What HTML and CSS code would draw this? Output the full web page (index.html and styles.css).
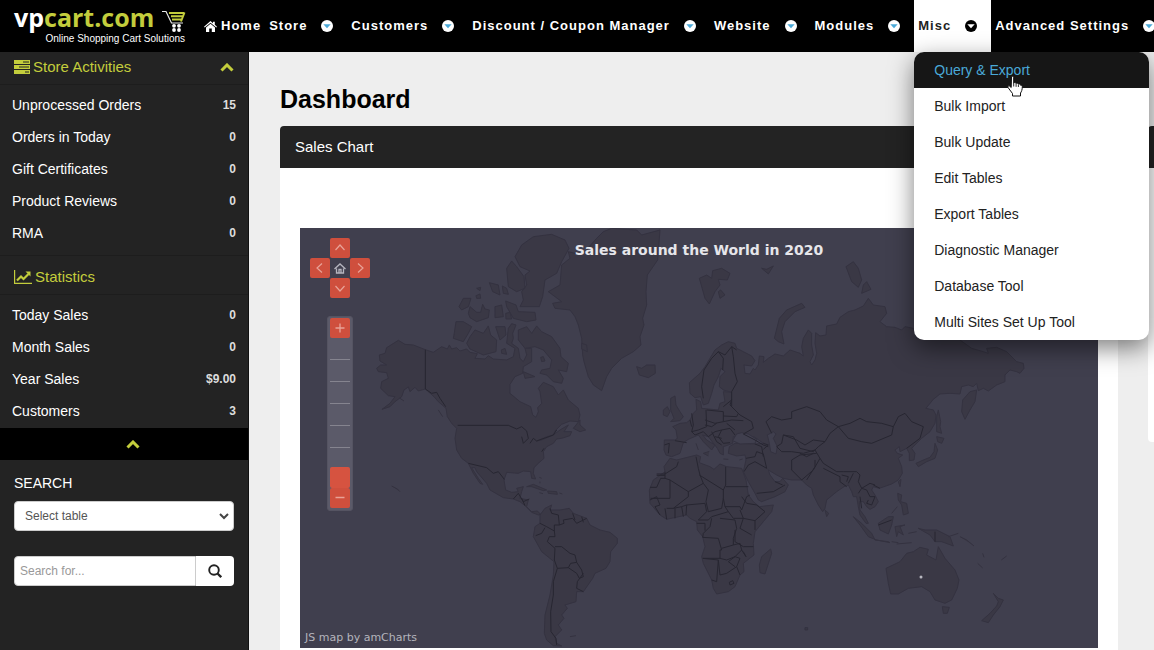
FILE: index.html
```html
<!DOCTYPE html>
<html lang="en">
<head>
<meta charset="utf-8">
<meta name="viewport" content="width=device-width, initial-scale=1">
<title>Dashboard - vpcart.com</title>
<link rel="stylesheet" href="styles.css">
</head>
<body>
<svg class="defs" aria-hidden="true">
  <symbol id="caret" viewBox="0 0 12 12"><circle class="disc" cx="6" cy="6" r="6"/><path class="arrow" d="M2.3 4.2h7.4L6 8.2z"/></symbol>
  <symbol id="chevron-up" viewBox="0 0 14 9"><path d="M1.5 7.5 7 2l5.500 5.500" fill="none" stroke="currentColor" stroke-width="3"/></symbol>
  <symbol id="thin-up" viewBox="0 0 20 20"><path d="M5.500 12 10 7l4.500 5" fill="none" stroke="currentColor" stroke-width="1.200"/></symbol>
</svg>
<div class="app">
  <header class="header">
    <a class="logo" href="#">
      <span class="brand"><span class="brand-vp">vp</span>cart.com</span>
      <span class="tagline">Online Shopping Cart Solutions</span>
      <svg class="cart" viewBox="0 0 24 22" aria-hidden="true">
        <path d="M0 1.500h4L9.500 13H21" fill="none" stroke="#e8e8e8" stroke-width="1.200"/>
        <path d="M7 3h15.500M9 6.300h12M10 9.500h10M22.500 2.500l-3.500 9" fill="none" stroke="#c3cd3c" stroke-width="2"/>
        <g fill="#fff"><circle cx="12" cy="15.800" r="1.900"/><circle cx="17" cy="15.800" r="1.900"/><circle cx="12" cy="20" r="1.900"/><circle cx="17" cy="20" r="1.900"/></g>
      </svg>
    </a>
    <nav class="nav">
      <a class="nav-item" href="#"><svg class="home" viewBox="0 0 13 11" aria-hidden="true"><path fill="currentColor" d="M6.500 0 9 2.200V.8h1.800v3L13 5.800l-.7.8-5.800-4.900L.7 6.600 0 5.800zM6.500 2.800l4.500 3.800V11H7.800V7.500H5.200V11H2V6.600z"/></svg>Home</a>
      <a class="nav-item" href="#">Store<svg class="caret" aria-hidden="true"><use href="#caret"/></svg></a>
      <a class="nav-item" href="#">Customers<svg class="caret" aria-hidden="true"><use href="#caret"/></svg></a>
      <a class="nav-item" href="#">Discount / Coupon Manager<svg class="caret" aria-hidden="true"><use href="#caret"/></svg></a>
      <a class="nav-item" href="#">Website<svg class="caret" aria-hidden="true"><use href="#caret"/></svg></a>
      <a class="nav-item" href="#">Modules<svg class="caret" aria-hidden="true"><use href="#caret"/></svg></a>
      <div class="nav-group">
        <a class="nav-item open" href="#">Misc<svg class="caret" aria-hidden="true"><use href="#caret"/></svg></a>
        <div class="menu">
          <a class="active" href="#">Query &amp; Export</a>
          <a href="#">Bulk Import</a>
          <a href="#">Bulk Update</a>
          <a href="#">Edit Tables</a>
          <a href="#">Export Tables</a>
          <a href="#">Diagnostic Manager</a>
          <a href="#">Database Tool</a>
          <a href="#">Multi Sites Set Up Tool</a>
          <svg class="pointer" viewBox="0 0 16 22" aria-hidden="true"><path d="M4.500 1.500c1.200-.8 2.200 0 2.200 1.200V8c.8-.8 2-.5 2.300.5 1-.8 2-.3 2.300.6 1.200-.6 2.200.2 2.300 1.200 1-.2 1.700.4 1.700 1.400 0 3-.8 5-1.800 6.300v3H5.500v-2.500L1 12.500c-.6-1.200.8-2.200 1.800-1.300l1.400 1.300z" fill="#fff" stroke="#111" stroke-width="1"/><path d="M6.700 8v3.500M9.100 8.800v3M11.400 9.500v2.500" stroke="#111" stroke-width=".9"/></svg>
        </div>
      </div>
      <a class="nav-item" href="#">Advanced Settings<svg class="caret" aria-hidden="true"><use href="#caret"/></svg></a>
    </nav>
  </header>
  <div class="body">
    <aside class="sidebar">
      <h2 class="side-title first"><svg class="tasks" viewBox="0 0 16 14" aria-hidden="true"><path fill="#c3cd3c" d="M0 0h16v4H0zM0 5h16v4H0zM0 10h16v4H0z"/><path stroke="#232323" stroke-width="1" d="M9 2h6M5 7h10M11 12h4"/></svg>Store Activities<svg class="chevron" aria-hidden="true"><use href="#chevron-up"/></svg></h2>
      <ul class="stats">
        <li><a href="#">Unprocessed Orders</a><b>15</b></li>
        <li><a href="#">Orders in Today</a><b>0</b></li>
        <li><a href="#">Gift Certificates</a><b>0</b></li>
        <li><a href="#">Product Reviews</a><b>0</b></li>
        <li><a href="#">RMA</a><b>0</b></li>
      </ul>
      <h2 class="side-title"><svg class="chart" viewBox="0 0 18 14" aria-hidden="true"><path d="M.6 0v13.400H18" fill="none" stroke="#c3cd3c" stroke-width="1.200"/><path d="M3 10.500 7 6.500l2.500 2.500 5-5" fill="none" stroke="#c3cd3c" stroke-width="2.200"/><path d="M11.500 1.500h5v5z" fill="#c3cd3c"/></svg>Statistics</h2>
      <ul class="stats last">
        <li><a href="#">Today Sales</a><b>0</b></li>
        <li><a href="#">Month Sales</a><b>0</b></li>
        <li><a href="#">Year Sales</a><b>$9.00</b></li>
        <li><a href="#">Customers</a><b>3</b></li>
      </ul>
      <button class="collapse" type="button" aria-label="Collapse"><svg class="chevron" aria-hidden="true"><use href="#chevron-up"/></svg></button>
      <form class="search">
        <label for="table">SEARCH</label>
        <div class="select-wrap">
          <select id="table"><option>Select table</option></select>
          <svg viewBox="0 0 10 7" aria-hidden="true"><path d="m1 1 4 4 4-4" fill="none" stroke="#444" stroke-width="2"/></svg>
        </div>
        <div class="search-row">
          <input type="text" placeholder="Search for..." aria-label="Search for">
          <button type="button" aria-label="Search"><svg viewBox="0 0 14 14" aria-hidden="true"><circle cx="6" cy="6" r="4.800" fill="none" stroke="#222" stroke-width="1.900"/><path d="m9.500 9.500 3.700 3.700" stroke="#222" stroke-width="2.300"/></svg></button>
        </div>
      </form>
    </aside>
    <main class="main">
      <h1>Dashboard</h1>
      <div class="columns">
        <section class="panel sales">
          <h2>Sales Chart</h2>
          <div class="panel-body">
            <div class="map">
<svg class="world" viewBox="300 228 798 420" role="img" aria-label="World map">
  <!-- Americas and Greenland -->
  <g transform="translate(360 225) scale(.33333)">
    <g class="land">
      <path d="M58 390 75 385 80 368 115 346 135 358 160 360 196 374 220 382 245 365 262 372 268 360 275 372 290 368 300 378 320 372 330 382 352 386 345 400 375 402 385 392 400 402 440 405 460 395 465 370 440 355 445 310 455 296 468 300 458 325 460 340 455 355 475 370 480 400 490 410 500 390 495 370 515 370 515 410 490 425 488 445 465 455 450 478 450 505 480 530 512 545 518 570 528 577 535 560 533 548 545 535 540 500 535 490 550 472 580 485 595 510 610 495 625 525 655 550 660 570 655 590 630 588 605 598 585 618 580 630 560 635 530 648 545 645 580 630 600 615 625 600 612 620 635 620 630 632 605 640 590 642 580 655 560 665 550 680 552 700 535 715 522 728 520 745 527 762 515 760 512 740 490 738 475 745 440 742 432 765 437 795 455 802 475 800 470 790 490 785 485 800 480 820 505 825 500 845 515 860 532 858 542 868 535 870 515 862 495 842 480 830 460 822 430 818 390 795 380 775 350 740 345 728 335 728 355 760 368 778 360 775 340 745 325 715 305 700 290 675 285 640 290 610 275 595 262 575 258 550 235 530 222 515 196 492 175 498 165 487 150 500 145 486 132 495 125 515 105 530 90 545 66 553 90 535 105 515 85 512 62 490 65 470 85 460 80 443 55 440 50 430 62 420 80 420 60 408z"/>
      <path d="M540 870 555 850 575 840 570 855 600 855 628 850 640 865 680 880 690 900 720 915 750 922 772 940 772 955 752 980 750 1010 738 1030 705 1045 698 1060 670 1100 650 1100 648 1130 615 1140 622 1150 605 1170 612 1180 595 1200 605 1215 585 1235 590 1255 605 1263 580 1262 560 1245 553 1225 555 1170 570 1110 580 1050 582 1010 545 980 520 935 525 905 540 895z"/>
      <path d="M710 40 730 20 755 10 830 15 845 30 900 15 893 105 862 150 858 200 860 240 848 280 852 300 840 335 843 360 820 380 785 400 755 430 740 455 725 497 700 480 685 455 672 410 668 390 665 340 655 300 645 275 630 255 585 250 578 235 605 230 565 200 600 180 605 120 630 100 625 80 665 90z"/>
      <path d="M465 95 485 60 520 35 575 28 615 45 627 70 605 110 590 145 555 165 548 215 538 245 480 245 490 225 485 200 500 180 495 150 510 138 480 125zM440 130 455 108 470 125 492 155 495 190 470 200 445 185zM388 173 415 180 420 210 398 200zM427 183 440 190 445 208 430 205zM297 245 310 220 333 220 325 245 305 255zM325 265 330 245 350 262 362 262 368 238 375 252 388 255 385 278 350 290 330 278zM405 245 425 240 430 275 405 278zM437 228 468 240 475 260 525 262 528 285 500 290 460 280 440 245zM437 265 450 262 455 282 438 282zM282 330 288 290 310 290 335 305 325 325 310 350 280 340zM320 355 330 335 345 315 370 325 385 303 392 330 410 345 408 380 370 390 330 372zM407 305 435 305 438 330 420 345zM475 345 475 315 500 305 515 325 530 303 545 320 575 335 600 370 603 395 625 415 620 440 595 435 610 460 605 475 580 470 560 450 540 445 545 435 570 430 575 405 550 375 525 365 495 370zM490 440 525 455 495 460zM424 375 435 370 440 388 425 385zM542 397 550 395 555 408 545 410zM350 190 362 187 360 197zM348 212 360 207 362 220 350 220zM665 355 680 360 682 380 665 372zM830 425 845 430 860 420 885 420 886 445 865 458 838 450zM640 610 660 585 660 600 677 615 660 620zM500 785 520 778 560 795 550 797 515 785zM563 798 590 800 592 808 565 805zM538 803 549 806M598 804 607 807M235 555 248 575M120 520 132 528M95 783 112 792 120 800M538 757 545 760M630 1235 648 1232M540 770 540 775"/>
    </g>
    <path class="border" d="M196 374V492L215 505 230 502 240 520 257 545M293 601H445L470 612 485 605 500 618 505 640 490 655 485 635M510 655 520 640 530 648 580 630 590 615M325 715 380 728 400 745 415 740 433 763M460 822 475 805 490 830 508 822M485 820 495 842M570 850 575 865 595 870 598 900 612 895 610 885 638 880 650 895 680 880M638 865 645 885M665 875 670 892M540 895 560 905 583 918 583 900 598 900M527 932 545 925 555 908M583 918 585 935 568 935 562 950 585 970 583 1005 592 1030 625 1028 632 1015 650 1012 645 990 630 985 605 965 585 965M592 1030 580 1070 580 1110 572 1160 573 1220 588 1240 590 1260M625 1028 650 1045 658 1060 670 1055 665 1035 650 1012M670 1045 652 1070 650 1090 670 1100M545 680 552 670"/>
  </g>
  <!-- Eurasia -->
  <g transform="translate(640 230) scale(.33333)">
    <g class="land">
      <path d="M148 458 180 430 195 410 210 385 225 360 245 345 265 335 285 340 290 355 310 365 335 378 345 392 335 408 312 405 315 430 330 432 340 415 345 420 355 405 358 378 372 380 370 397 385 385 405 372 430 378 450 360 480 370 490 378 485 350 490 325 505 300 515 310 515 345 520 375 510 395 515 405 525 390 530 370 525 340 527 308 540 318 558 315 560 288 590 282 600 262 625 245 645 240 670 228 685 205 700 225 735 230 740 250 720 275 740 290 765 292 785 300 795 290 820 295 830 325 900 310 960 330 995 355 1030 365 1045 370 1040 355 1070 352 1100 365 1130 395 1150 400 1152 415 1140 430 1130 425 1110 420 1095 435 1095 455 1070 465 1045 483 1030 475 1015 482 1010 460 1000 470 985 465 965 470 960 492 930 490 900 492 880 508 858 535 880 540 888 555 885 580 870 605 845 625 815 655 825 670 822 690 808 692 808 670 800 655 780 665 778 650 765 660 772 670 788 675 775 685 785 710 787 730 775 750 755 762 718 775 700 770 695 780 705 795 715 815 705 830 690 838 680 830 670 815 658 815 660 840 675 860 685 880 678 880 660 855 655 830 650 800 640 800 635 785 625 765 612 770 590 785 560 810 555 835 548 845 535 825 520 795 515 775 500 765 485 750 455 750 430 745 410 735 385 720 390 735 405 755 420 755 428 745 445 765 435 785 405 800 365 815 355 810 345 790 325 755 310 725 318 690 315 675 290 678 265 670 268 650 285 640 345 642 370 640 345 622 330 618 310 612 305 625 295 615 280 620 278 640 265 645 250 650 250 675 240 670 232 655 205 620 188 615 200 630 225 645 215 660 190 635 175 615 145 628 130 638 120 670 95 680 78 675 72 660 73 630 105 630 112 625 108 600 98 590 120 580 140 578 150 570 160 550 170 540 168 508 182 515 185 535 235 540 240 520 255 515 250 485 275 487 250 480 238 470 240 440 255 425 243 415 235 440 222 465 215 490 205 520 190 525 182 500 165 503 150 490z"/>
      <path d="M178 145 200 135 215 145 218 122 245 115 270 130 262 150 235 148 240 165 225 185 208 222 195 205zM235 185 242 180 255 195 240 205zM365 115 380 118 400 108 385 132zM618 110 640 95 655 115 665 150 655 172 635 155zM665 190 670 165 680 155 693 178zM403 325 418 265 440 240 485 220 495 232 465 245 435 275 425 305 432 342 415 335zM92 505 105 498 108 525 120 545 130 560 120 572 92 575 102 565 92 540zM70 540 82 530 90 545 82 560 70 555zM208 664 190 670 205 678M168 640 175 660M250 687 265 688M298 690 308 687M555 840 566 850 560 860z"/>
      <path d="M895 540 902 575 900 590 905 610 890 605 890 560zM890 620 912 625 905 640 893 635zM885 640 893 660 885 685 860 695 835 710 828 700 850 690 870 682 882 665zM965 545 968 510 990 485 1010 480 1005 515 990 540 975 568zM775 755 783 748 780 770zM773 790 785 795 782 815 800 820 805 850 790 855 785 825 775 810zM640 860 665 880 695 910 705 930 745 935 750 938 710 930 685 920 660 885zM715 880 745 860 760 860 755 885 745 912 720 900zM765 890 795 885 780 890 790 915 775 905 770 920zM835 895 855 900 890 900 930 920 940 948 905 935 885 935 870 915zM755 935 775 938M770 942 815 938M805 910 830 905M925 920 955 910M960 920 980 930 1002 948M1028 970 1032 982M1013 1000 1028 1014M1084 990 1100 978M755 850 772 830"/>
      <path d="M738 1015 780 995 800 970 820 965 840 952 865 958 860 975 888 990 895 950 915 985 945 1020 957 1050 952 1075 935 1110 915 1120 885 1110 870 1085 845 1070 805 1075 775 1092 752 1092 745 1060zM907 1130 928 1132 922 1150 910 1150zM1060 1090 1075 1105 1090 1110 1080 1130 1060 1155 1045 1178 1025 1172 1050 1150 1070 1128 1075 1115z"/>
    </g>
    <g class="sea">
      <path d="M278 632 290 612 305 608 325 612 350 628 345 640 300 642zM382 615 400 605 408 612 400 625 412 650 408 672 392 665 388 640z"/>
    </g>
    <path class="border" d="M190 505 185 470 192 420 215 385 235 365 255 375 275 350 290 360M235 365 250 385 248 420M275 350 280 380 285 430 292 455 275 485 275 530 300 555 335 575 340 595 310 612 345 630 370 645 385 650M155 550 160 585 155 605 175 600 200 590 198 540M200 540 250 545 250 575 225 580 195 570M250 530 275 510 270 525 295 550 290 560 250 558M250 575 275 570 310 572M245 600 270 595 285 615M155 605 165 615 190 605 205 620 225 605 245 600 235 620 250 640 270 638M195 585 215 590 230 580M215 605 230 635 245 645M73 645 88 640 85 670M105 632 140 638M150 570 155 590M225 620 245 625M260 580 285 600M378 575 395 560 425 570 455 565 455 545 500 530 540 545 560 570 595 590 570 610 555 635 520 630 495 645 470 630 430 615 425 640 410 650 425 665 455 665 490 670 525 660 540 685 550 700 590 725 610 725 650 725 660 735 655 755 665 775 690 760 705 765M378 575 395 610M430 615 460 620 480 655 520 665 535 650 555 635M595 590 630 580 660 565 680 575 725 580 760 590 775 560 795 550 815 575 850 590 840 625 800 655M595 590 625 625 665 635 695 640 755 615 760 590M480 670 500 680 520 670M455 690 455 720 485 750 520 720 540 685M455 690 480 675 530 670M525 690 525 710 500 750M550 715 600 740 600 755 620 770M605 735 625 740 620 755M640 730 625 760M655 790 665 775 680 780 690 800 705 800 695 825 680 820 685 810M700 765 720 775M660 800 665 835M318 685 345 680 350 665 370 672 380 715 345 695 325 705 312 725M350 790 400 785 435 765M370 680 365 650 345 642M370 640 385 645 370 658M405 755 428 765M885 905V935M715 885 755 870"/>
  </g>
  <!-- Africa -->
  <g transform="translate(640 400) scale(.33333)">
    <g class="land">
      <path d="M75 215 72 200 90 175 110 180 170 165 182 170 178 188 210 200 222 208 240 192 260 200 305 205 318 240 325 285 340 305 358 320 400 315 395 335 370 365 345 395 340 430 342 465 310 490 312 515 300 525 285 560 265 575 230 582 220 565 215 540 190 490 185 470 195 440 188 410 172 390 170 365 150 355 140 345 80 358 60 345 30 310 28 270 40 240z"/>
      <path d="M392 447 395 460 375 522 360 518 358 495 365 470zM495 683h8v7h-8z"/>
    </g>
    <path class="border" d="M50 222H75L110 200 115 185M50 226H75M75 215V235H62L50 262H30M75 235 90 240 145 275 190 250 180 225 175 205 168 170M90 240V295H32M178 225 250 270 257 255V200M257 260H325M145 275V290L100 325 80 325M250 270 250 295 245 325 205 335 198 305 205 270 190 250M250 295 255 320 300 320 305 330 320 290 330 285M305 290 320 310 350 315 375 335 345 362 310 355 300 330M30 300 50 290 60 315 45 320 60 345M75 325 80 358M105 325V355M125 320 130 350M100 325 125 320 140 315 195 310M140 315 138 345M195 310 200 335 175 360 205 360 215 350 265 335 255 320M215 355 210 380 190 400 188 412 235 415 245 450H240V475L190 475M240 355 285 360 290 385 280 415 280 435 245 445M265 335 280 355 310 355 300 385 335 405M345 362V390M285 390 285 425 310 440 340 440M280 435 300 430 305 450 285 470 260 480 240 475M305 450 318 470 310 455M188 475 235 480 230 545 215 540M235 480 240 525 260 520 290 500 300 475 285 470 265 485 285 500M290 500 300 525M268 547 278 542 282 550 270 555zM170 370 195 370 195 392"/>
  </g>
  <circle cx="921" cy="577" r="1.500" fill="#b8b8c0"/>
</svg>
              <p class="map-title">Sales around the World in 2020</p>
              <div class="pan">
                <button class="up" type="button" aria-label="Pan up"><svg aria-hidden="true"><use href="#thin-up"/></svg></button>
                <button class="left" type="button" aria-label="Pan left"><svg aria-hidden="true"><use href="#thin-up"/></svg></button>
                <button class="reset" type="button" aria-label="Home"><svg viewBox="0 0 20 20" aria-hidden="true"><path d="m4.500 11 5.500-5 5.500 5M6.500 10.500V15h7v-4.500M9 15v-3.500h2V15" fill="none" stroke="#b5b5bf" stroke-width="1.300"/></svg></button>
                <button class="right" type="button" aria-label="Pan right"><svg aria-hidden="true"><use href="#thin-up"/></svg></button>
                <button class="down" type="button" aria-label="Pan down"><svg aria-hidden="true"><use href="#thin-up"/></svg></button>
              </div>
              <div class="zoom">
                <button type="button" aria-label="Zoom in"><svg viewBox="0 0 20 20" aria-hidden="true"><path d="M5.500 10h9M10 5.500v9" stroke="currentColor" stroke-width="1.300"/></svg></button>
                <input type="range" min="0" max="6" value="0" aria-label="Zoom level">
                <button type="button" aria-label="Zoom out"><svg viewBox="0 0 20 20" aria-hidden="true"><path d="M5.500 9.500h9" stroke="currentColor" stroke-width="1.500"/></svg></button>
              </div>
              <a class="credit" href="#">JS map by amCharts</a>
            </div>
          </div>
        </section>
        <section class="panel aside-panel"><h2>&nbsp;</h2><div class="aside-body"></div></section>
      </div>
    </main>
  </div>
</div>
</body>
</html>
```

FILE: styles.css
```css
* { box-sizing: border-box; }
body { margin: 0; font: 14px/20px "Liberation Sans", Arial, sans-serif; color: #222; background: #eee; }
h1, h2, p, ul { margin: 0; padding: 0; }
a { color: inherit; text-decoration: none; }
button { padding: 0; border: 0; font: inherit; cursor: pointer; }
svg { display: block; flex: none; }
.defs { position: absolute; width: 0; height: 0; }

.app { height: 100vh; overflow: hidden; display: flex; flex-direction: column; }
.header { flex: none; height: 52px; display: flex; background: #000; color: #fff; }
.logo { position: relative; flex: none; width: 200px; padding: 3px 15px 0 14px; display: flex; flex-direction: column; gap: 2px; }
.brand { font: bold 25px/28px "Open Sans", sans-serif; color: #c3cd3c; }
.brand-vp { color: #fff; }
.tagline { font-size: 10px; line-height: 12px; text-align: right; white-space: nowrap; }
.cart { position: absolute; left: 162px; top: 10px; width: 24px; height: 22px; }

.nav { display: flex; }
.nav-item { flex: none; height: 52px; padding: 0 4px; display: flex; align-items: center; font-size: 13px; font-weight: bold; letter-spacing: 1px; white-space: nowrap; }
.home { width: 13px; height: 11px; margin-right: 4px; }
.caret { width: 12px; height: 12px; margin: 0 10px 0 14px; fill: #fff; --arrow: #4aa9d8; }
.caret .disc { fill: inherit; }
.arrow { fill: var(--arrow); }
.open { background: #fff; color: #222; }
.open .caret { fill: #000; --arrow: #fff; }
.nav-group { position: relative; flex: none; z-index: 5; }
.menu { position: absolute; top: 52px; left: 0; width: 235px; border-radius: 10px; background: #fff; box-shadow: 0 8px 24px rgba(0, 0, 0, .5); color: #222; }
.menu a { display: block; padding: 8px 20px; }
.menu .active { background: #161616; color: #4aa9d8; border-radius: 10px 10px 0 0; }
.pointer { position: absolute; left: 93px; top: 23px; width: 16px; height: 22px; }

.body { flex: 1; min-height: 0; display: flex; }
.sidebar { flex: none; width: 249px; background: #232323; color: #fff; border-right: 1px solid #111; }
.side-title { display: flex; align-items: center; gap: 3px; padding: 11px 14px 7px; border-top: 1px solid #1d1d1d; border-bottom: 1px solid #1d1d1d; font-size: 15px; font-weight: normal; color: #c3cd3c; }
.side-title.first { padding: 5px 14px 7px; border-top: 0; }
.tasks { width: 16px; height: 14px; }
.chart { width: 18px; height: 14px; }
.chevron { width: 14px; height: 9px; color: #c3cd3c; }
.side-title .chevron { margin-left: auto; }
.stats { list-style: none; padding: 4px 12px 6px; }
.stats.last { padding-bottom: 1px; }
.stats li { display: flex; justify-content: space-between; padding: 6px 0; }
.stats b { font-size: 12px; color: #ddd; }
.collapse { width: 100%; height: 32px; padding-left: 18px; display: flex; align-items: center; justify-content: center; background: #000; }
.search { padding: 13px 14px; }
.search label { display: block; margin-bottom: 8px; }
.select-wrap { position: relative; margin-bottom: 25px; }
.select-wrap svg { position: absolute; right: 5px; top: 12px; width: 10px; height: 7px; pointer-events: none; }
select { appearance: none; width: 100%; height: 30px; padding: 0 10px; border: 1px solid #ccc; border-radius: 4px; background: #fff; color: #555; font: 12px "Liberation Sans", Arial, sans-serif; }
.search-row { display: flex; height: 30px; }
.search-row input { flex: 1; min-width: 0; padding: 0 5px; border: 1px solid #ccc; border-radius: 4px 0 0 4px; font: 12px "Liberation Sans", Arial, sans-serif; }
.search-row input::placeholder { color: #999; }
.search-row button { width: 38px; display: grid; place-items: center; background: #fff; border-radius: 0 4px 4px 0; }
.search-row svg { width: 14px; height: 14px; }

.main { flex: 1; min-width: 0; padding: 32px 0 0 31px; overflow: hidden; }
h1 { font-size: 25px; line-height: 30px; color: #000; margin-bottom: 12px; }
.columns { display: flex; gap: 30px; align-items: flex-start; }
.panel { flex: none; background: #fff; border-radius: 4px; overflow: hidden; }
.panel h2 { padding: 11px 15px; background: #232323; color: #fff; font-size: 15px; font-weight: normal; }
.sales { width: calc(100% - 36px); }
.aside-panel { width: 320px; }
.aside-body { height: 274px; }
.panel-body { padding: 60px 20px 20px; }
.map { position: relative; background: #403f4e; }
.world { width: 100%; height: auto; }
.land { fill: #3a3845; stroke: #343240; }
.sea { fill: #403f4e; stroke: #343240; }
.border { fill: none; stroke: #272631; }
.land path, .sea path, .border { vector-effect: non-scaling-stroke; stroke-width: 1px; stroke-linejoin: round; }
.map-title { position: absolute; top: 12px; left: 0; right: 0; text-align: center; font: bold 14px/20px "DejaVu Sans", Verdana, sans-serif; color: #e6e6ea; }
.credit { position: absolute; left: 5px; bottom: 2px; font: 11px/16px "DejaVu Sans", Verdana, sans-serif; color: #b4b4bc; }
.pan { position: absolute; left: 10px; top: 10px; display: grid; grid: "a u b" 20px "l c r" 20px "d s e" 20px / 20px 20px 20px; }
.pan button, .zoom button { width: 20px; height: 20px; border-radius: 2px; background: #cf4f3d; color: #e8a297; }
.pan svg, .zoom svg { width: 20px; height: 20px; }
.pan .up { grid-area: u; }
.pan .left { grid-area: l; }
.pan .right { grid-area: r; }
.pan .down { grid-area: s; }
.pan .reset { grid-area: c; background: none; }
.left svg { transform: rotate(-90deg); }
.right svg { transform: rotate(90deg); }
.down svg { transform: rotate(180deg); }
.zoom { position: absolute; left: 27px; top: 88px; padding: 1px 2px 2px; border: 1px solid #555462; border-radius: 3px; background: #5b5a69; display: flex; flex-direction: column; }
.zoom input { appearance: none; writing-mode: vertical-lr; direction: rtl; width: 20px; height: 150px; margin: 0; background: repeating-linear-gradient(transparent 0 21px, #85848f 21px 22px); }
.zoom input::-webkit-slider-thumb { appearance: none; width: 20px; height: 21px; border-radius: 2px; background: #d65340; }
```
